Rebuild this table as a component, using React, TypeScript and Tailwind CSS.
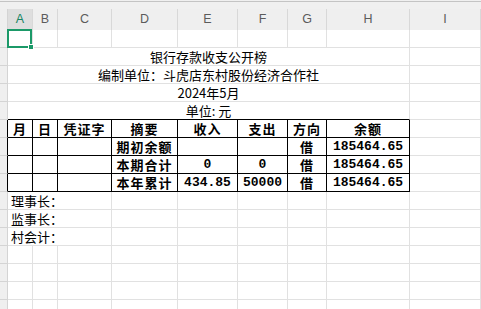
import React from 'react';

const cjk = '[font-family:"Noto_Sans_CJK_SC","Noto_Sans",sans-serif]';
const mono = '[font-family:"Liberation_Mono","Noto_Sans_CJK_SC",monospace]';

const gridCols = 'grid grid-cols-[8px_25px_25px_54px_66px_60px_50px_39px_83px_1fr]';
const cell = 'h-[18px] border-r border-b border-[#e1e1e1] flex items-center justify-center overflow-visible whitespace-nowrap';
const rowHead = 'h-[18px] border-r border-b border-[#d4d4d4] bg-[#efefef]';

const letters = ['A', 'B', 'C', 'D', 'E', 'F', 'G', 'H', 'I'];

function ColumnHeader() {
  return (
    <div className={`${gridCols} h-[21px] bg-[#efefef] font-['Liberation_Sans',sans-serif] text-[12.5px] text-[#5b5b5b]`}>
      <div className="border-r border-[#d4d4d4]" />
      {letters.map((l, i) => (
        <div
          key={l}
          className={`flex items-center justify-center border-r border-[#d8d8d8] ${
            i === 0 ? 'bg-[#dedede] text-[#178564]' : ''
          }`}
        >
          {l}
        </div>
      ))}
    </div>
  );
}

function EmptyRow({ selected }: { selected?: boolean }) {
  return (
    <div className={gridCols}>
      <div className={`${rowHead} ${selected ? 'bg-[#dadada]' : ''}`} />
      {letters.map((l, i) => (
        <div key={l} className={`${cell} ${i === 0 && selected ? 'relative' : ''}`}>
          {i === 0 && selected && (
            <div className="absolute -left-[1px] -top-[1px] -right-[0px] -bottom-[1px] border-2 border-[#1b9968]">
              <div className="absolute -right-[4px] -bottom-[4px] h-[6px] w-[6px] border border-white bg-[#1b9968]" />
            </div>
          )}
        </div>
      ))}
    </div>
  );
}

function MergedRow({ text, bottomBlack }: { text: string; bottomBlack?: boolean }) {
  return (
    <div className={gridCols}>
      <div className={rowHead} />
      <div
        className={`col-span-8 h-[18px] border-r border-b border-r-[#e1e1e1] flex items-center justify-center whitespace-nowrap text-[13px] text-black ${cjk} ${
          bottomBlack ? 'border-b-black' : 'border-b-[#e1e1e1]'
        }`}
      >
        {text}
      </div>
      <div className={cell} />
    </div>
  );
}

function TableRow({ values, head }: { values: string[]; head?: boolean }) {
  return (
    <div className={gridCols}>
      <div className={`${rowHead} border-r-black`} />
      {values.map((v, i) => {
        const isNum = /^[0-9.]+$/.test(v);
        return (
          <div
            key={i}
            className={`h-[18px] border-r border-b border-black flex items-center justify-center whitespace-nowrap font-bold text-black ${
              isNum ? `${mono} text-[13px]` : `${cjk} text-[13px] tracking-[1px]`
            } ${head ? '' : ''}`}
          >
            {v}
          </div>
        );
      })}
      <div className={cell} />
    </div>
  );
}

function SignRow({ text }: { text: string }) {
  return (
    <div className={gridCols}>
      <div className={rowHead} />
      <div className={`col-span-3 h-[18px] border-r border-b border-[#e1e1e1] flex items-center pl-[3px] whitespace-nowrap text-[13px] text-black ${cjk}`}>
        {text}
      </div>
      {[0, 1, 2, 3, 4, 5].map((i) => (
        <div key={i} className={cell} />
      ))}
    </div>
  );
}

export default function App() {
  return (
    <div className="h-[309px] w-[481px] overflow-hidden bg-white">
      <div className="h-[9px] bg-[#f0f0f0] pt-[1px]">
        <div className="h-[1px] bg-[#c4c4c4]" />
      </div>
      <ColumnHeader />
      <EmptyRow selected />
      <MergedRow text="银行存款收支公开榜" />
      <MergedRow text="编制单位：斗虎店东村股份经济合作社" />
      <MergedRow text="2024年5月" />
      <MergedRow text="单位: 元" bottomBlack />
      <TableRow head values={['月', '日', '凭证字', '摘要', '收入', '支出', '方向', '余额']} />
      <TableRow values={['', '', '', '期初余额', '', '', '借', '185464.65']} />
      <TableRow values={['', '', '', '本期合计', '0', '0', '借', '185464.65']} />
      <TableRow values={['', '', '', '本年累计', '434.85', '50000', '借', '185464.65']} />
      <SignRow text="理事长：" />
      <SignRow text="监事长：" />
      <SignRow text="村会计：" />
      <EmptyRow />
      <EmptyRow />
      <EmptyRow />
      <EmptyRow />
    </div>
  );
}
